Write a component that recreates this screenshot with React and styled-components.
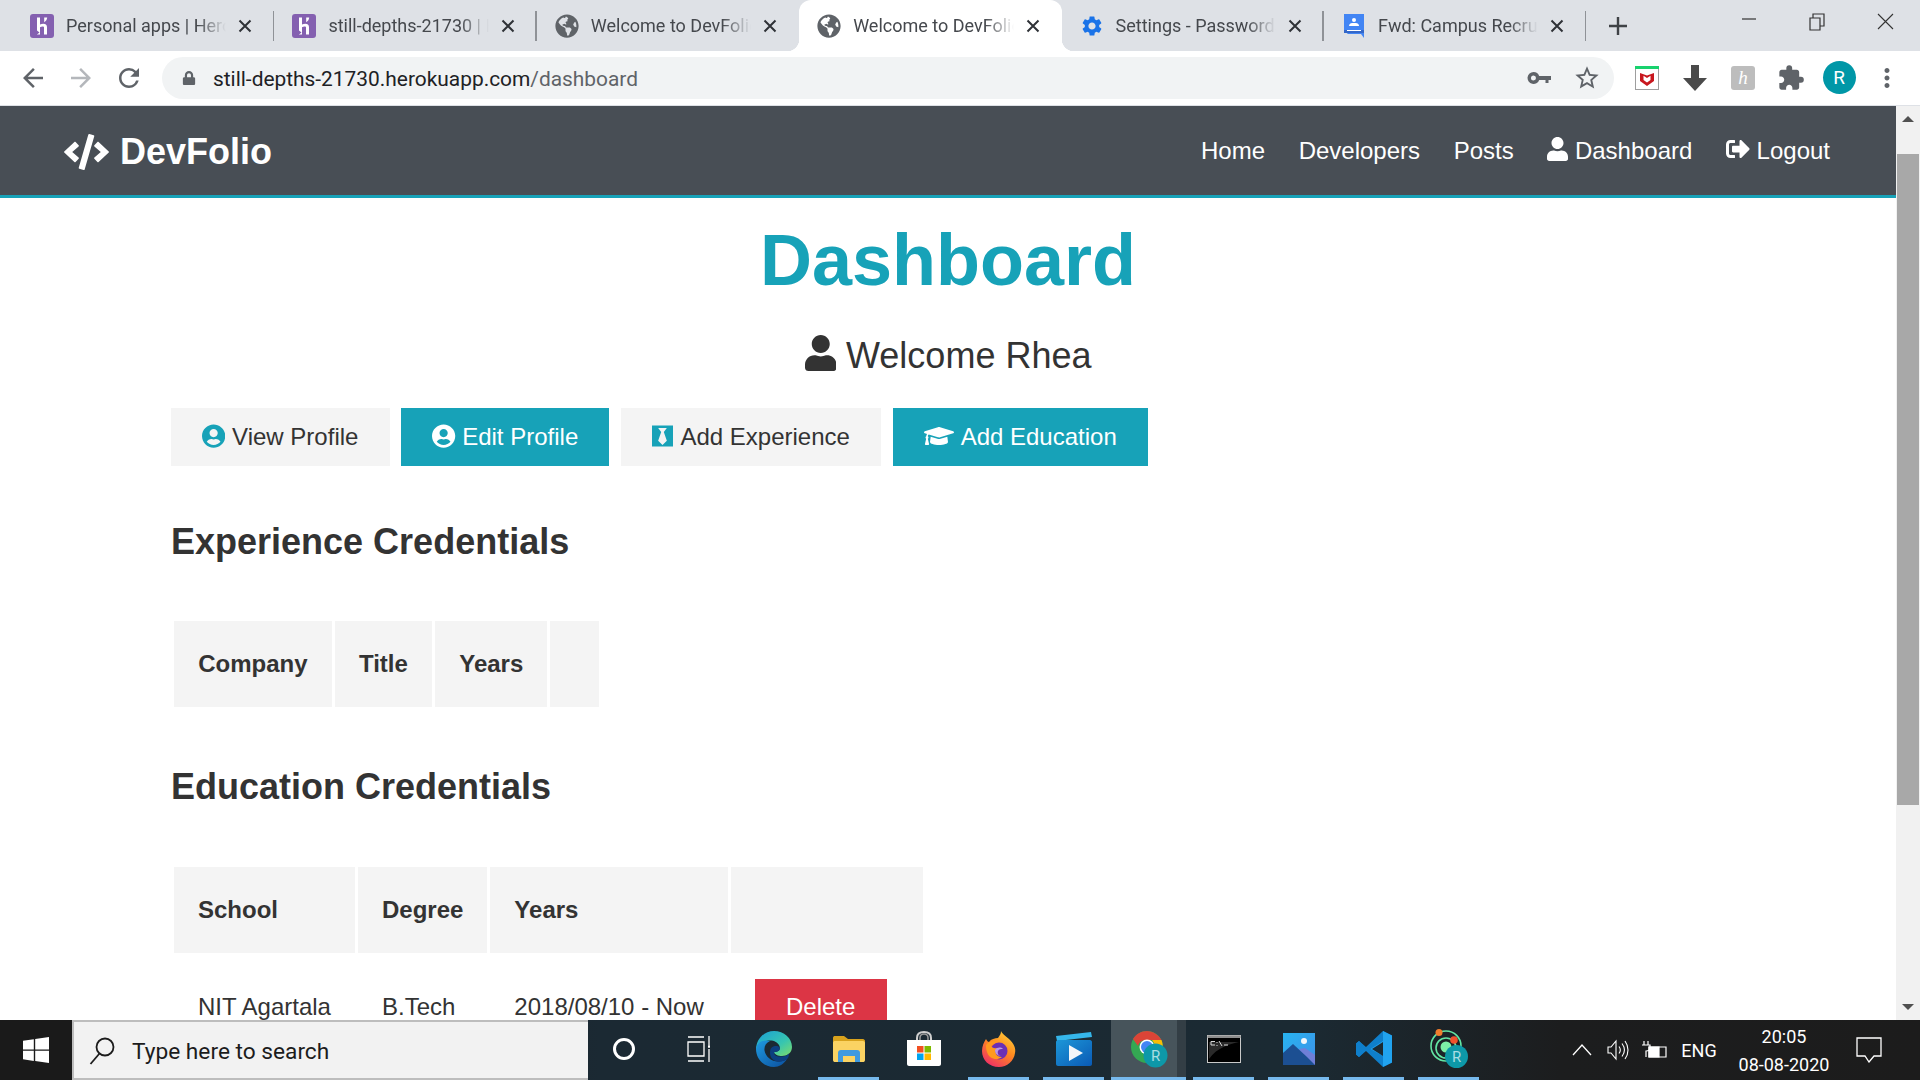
import React from "react";
import styled, { createGlobalStyle } from "styled-components";
import {
  FaCode,
  FaUser,
  FaSignOutAlt,
  FaUserCircle,
  FaBlackTie,
  FaGraduationCap,
  FaGlobeAmericas,
  FaLock,
} from "react-icons/fa";
import {
  MdSettings,
  MdArrowBack,
  MdArrowForward,
  MdRefresh,
  MdStarBorder,
  MdExtension,
  MdMoreVert,
} from "react-icons/md";

const GlobalStyle = createGlobalStyle`
  html, body {
    margin: 0;
    padding: 0;
    height: 100%;
    overflow: hidden;
    background: #fff;
  }
  * {
    box-sizing: border-box;
  }
`;

const uiFont = `Roboto, "Noto Sans", sans-serif`;
const pageFont = `"Liberation Sans", Arial, sans-serif`;

const Shell = styled.div`
  display: flex;
  flex-direction: column;
  width: 1920px;
  height: 1080px;
  overflow: hidden;
`;

/* browser tabs */
const TabStrip = styled.div`
  display: flex;
  align-items: stretch;
  flex: 0 0 51px;
  padding-left: 12px;
  background: #dee1e6;
  font-family: ${uiFont};
`;

const Tab = styled.div`
  position: relative;
  display: flex;
  align-items: center;
  flex: 0 0 262.4px;
  min-width: 0;
  padding: 0 22px 0 18px;
  gap: 12px;
  background: ${(props) => (props.$active ? "#fff" : "transparent")};
  border-radius: ${(props) => (props.$active ? "12px 12px 0 0" : "0")};

  &::after {
    content: "";
    display: ${(props) => (props.$sep ? "block" : "none")};
    position: absolute;
    right: 0;
    top: 11px;
    width: 1.5px;
    height: 30px;
    background: #8f9297;
  }
`;

const TabCurve = styled.span`
  position: absolute;
  bottom: 0;
  width: 12px;
  height: 12px;
  ${(props) =>
    props.$side === "left"
      ? "left: -12px; background: radial-gradient(circle at 0 0, transparent 12px, #fff 12.5px);"
      : "right: -12px; background: radial-gradient(circle at 100% 0, transparent 12px, #fff 12.5px);"}
`;

const Favicon = styled.span`
  display: flex;
  align-items: center;
  justify-content: center;
  flex: 0 0 24px;
  height: 24px;
  color: ${(props) => props.$color};
  font-size: 24px;
`;

const TabTitle = styled.span`
  flex: 1;
  min-width: 0;
  overflow: hidden;
  white-space: nowrap;
  font-size: 18px;
  color: #45484d;
  -webkit-mask-image: linear-gradient(90deg, #000 82%, transparent 100%);
  mask-image: linear-gradient(90deg, #000 82%, transparent 100%);
`;

const NewTabButton = styled.div`
  display: flex;
  align-items: center;
  justify-content: center;
  flex: 0 0 24px;
  margin-left: 19.6px;
`;

const WindowControls = styled.div`
  display: flex;
  margin-left: auto;
  padding-right: 1px;
`;

const WindowButton = styled.div`
  display: flex;
  justify-content: center;
  padding-top: 13px;
  width: 68px;
`;

/* address bar */
const Toolbar = styled.div`
  display: flex;
  align-items: center;
  flex: 0 0 55px;
  padding: 0 9px 1px;
  background: #fff;
  border-bottom: 1px solid #dee1e6;
  font-family: ${uiFont};
`;

const ToolButton = styled.div`
  display: flex;
  align-items: center;
  justify-content: center;
  flex: 0 0 48px;
  height: 42px;
  font-size: ${(props) => props.$size || 30}px;
  color: ${(props) => props.$color || "#5f6368"};
`;

const AddressBar = styled.div`
  display: flex;
  align-items: center;
  flex: 1;
  height: 42px;
  margin: 0 9px 0 9px;
  padding-left: 20px;
  padding-right: 3px;
  background: #f1f3f4;
  border-radius: 21px;
`;

const Url = styled.div`
  flex: 1;
  margin-left: 17px;
  padding-top: 2px;
  font-size: 20.9px;
  color: #202124;
`;

const UrlPath = styled.span`
  color: #5f6368;
`;

const HerokuExt = styled.span`
  display: flex;
  align-items: center;
  justify-content: center;
  width: 24px;
  height: 24px;
  background: #bdbdbd;
  border-radius: 3px;
  color: #fff;
  font-family: "Liberation Serif", serif;
  font-style: italic;
  font-size: 19px;
`;

const Avatar = styled.span`
  display: flex;
  align-items: center;
  justify-content: center;
  width: 33px;
  height: 33px;
  border-radius: 50%;
  background: #0097a7;
  color: #fff;
  font-size: 19px;
`;

/* web page */
const Viewport = styled.div`
  display: flex;
  flex: 1;
  min-height: 0;
`;

const Page = styled.div`
  flex: 1;
  min-width: 0;
  overflow: hidden;
  background: #fff;
  font-family: ${pageFont};
  font-size: 24px;
  line-height: 1.6;
  color: #333;
`;

const Navbar = styled.nav`
  display: flex;
  align-items: center;
  justify-content: space-between;
  height: 92px;
  padding: 2px 66px 0 64px;
  background: #484e55;
  border-bottom: 3px solid #17a2b8;
  color: #fff;
`;

const Logo = styled.div`
  display: flex;
  align-items: center;
  gap: 11px;
  font-size: 36px;
  font-weight: 700;
`;

const LogoIcon = styled(FaCode)`
  width: 45px;
  height: 36px;
`;

const NavLinks = styled.div`
  display: flex;
  gap: 33.6px;
`;

const NavLink = styled.a`
  color: #fff;
`;

const UserGlyph = styled(FaUser)`
  width: 21px;
  height: 24px;
  vertical-align: -2px;
`;

const LogoutGlyph = styled(FaSignOutAlt)`
  width: 24px;
  height: 24px;
  vertical-align: -2px;
`;

const Container = styled.div`
  width: 1650px;
  margin: 0 auto;
  padding: 19px 48px 0;
`;

const Title = styled.h1`
  margin: 0 0 24px;
  font-size: 72px;
  line-height: 1.2;
  font-weight: 700;
  text-align: center;
  color: #17a2b8;
`;

const Lead = styled.p`
  margin: 0 0 23px;
  font-size: 36px;
  text-align: center;
`;

const LeadIcon = styled(FaUser)`
  width: 31.5px;
  height: 36px;
  vertical-align: -3px;
`;

const ButtonRow = styled.div`
  display: flex;
  gap: 11.5px;
`;

const ActionButton = styled.a`
  display: block;
  padding: 9.6px 31.2px;
  white-space: pre;
  background: ${(props) => (props.$primary ? "#17a2b8" : "#f4f4f4")};
  color: ${(props) => (props.$primary ? "#fff" : "#333")};
`;

const CircleGlyph = styled(FaUserCircle)`
  width: 23.25px;
  height: 24px;
  vertical-align: -3px;
  color: ${(props) => (props.$primary ? "#fff" : "#17a2b8")};
`;

const TieGlyph = styled(FaBlackTie)`
  width: 21px;
  height: 24px;
  margin-right: 2px;
  vertical-align: -3px;
  color: #17a2b8;
`;

const CapGlyph = styled(FaGraduationCap)`
  width: 30px;
  height: 24px;
  margin-right: 1.5px;
  vertical-align: -3px;
`;

const SectionTitle = styled.h2`
  margin: ${(props) => props.$top}px 0 48px;
  font-size: 36px;
  line-height: 1.6;
  font-weight: 700;
`;

const Table = styled.table`
  border-collapse: separate;
  border-spacing: 3px;
`;

const Th = styled.th`
  padding: 24px ${(props) => props.$pad || 24}px;
  line-height: 38px;
  text-align: left;
  background: #f4f4f4;
  font-weight: 700;
`;

const Td = styled.td`
  padding: 23px 24px 24px;
  text-align: left;
`;

const DeleteButton = styled.button`
  display: inline-block;
  margin-right: 12px;
  padding: 9.6px 31.2px;
  border: none;
  background: #dc3545;
  color: #fff;
  font: inherit;
`;

/* scrollbar */
const Scrollbar = styled.div`
  display: flex;
  flex-direction: column;
  align-items: center;
  flex: 0 0 24px;
  background: #f1f1f1;
`;

const ScrollArrow = styled.div`
  flex: 0 0 26px;
  display: flex;
  align-items: center;
  justify-content: center;
  margin-top: ${(props) => (props.$down ? "auto" : "0")};

  &::before {
    content: "";
    border-left: 6px solid transparent;
    border-right: 6px solid transparent;
    ${(props) =>
      props.$down
        ? "border-top: 6px solid #505050;"
        : "border-bottom: 6px solid #505050;"}
  }
`;

const ScrollThumb = styled.div`
  width: 22px;
  height: 651px;
  margin-top: 22px;
  background: #a8a8a8;
`;

/* windows taskbar */
const Taskbar = styled.div`
  display: flex;
  flex: 0 0 60px;
  background: linear-gradient(
    90deg,
    #1a1a1a 0,
    #1a1a1a 72px,
    #1b2933 600px,
    #1b2a33 1300px,
    #1c1d1e 1560px,
    #1c1c1c 100%
  );
  font-family: ${uiFont};
  color: #fff;
`;

const StartButton = styled.div`
  display: flex;
  align-items: center;
  justify-content: center;
  flex: 0 0 72px;
`;

const SearchBox = styled.div`
  display: flex;
  align-items: center;
  flex: 0 0 516px;
  padding: 2px 0 0 15px;
  gap: 17px;
  background: #f2f2f2;
  border: 2px solid #bdbdbd;
  border-right: none;
  color: #1c1c1c;
  font-size: 22.7px;
`;

const AppRow = styled.div`
  display: flex;
  margin-left: -2px;
`;

const AppSlot = styled.div`
  position: relative;
  display: flex;
  align-items: center;
  justify-content: center;
  flex: 0 0 75px;
  padding-bottom: 2px;
  background: ${(props) =>
    props.$active
      ? "linear-gradient(90deg, #47545b 0, #47545b 88%, #333e45 88%)"
      : "transparent"};

  &::after {
    content: "";
    display: ${(props) => (props.$open ? "block" : "none")};
    position: absolute;
    left: ${(props) => (props.$active ? "0" : "7px")};
    right: ${(props) => (props.$active ? "0" : "7px")};
    bottom: 0;
    height: 3px;
    background: #76b9ed;
  }
`;

const Tray = styled.div`
  display: flex;
  align-items: stretch;
  margin-left: auto;
  padding-right: 23px;
`;

const TrayItem = styled.div`
  display: flex;
  align-items: center;
  justify-content: center;
  flex: 0 0 ${(props) => props.$width}px;
  font-size: 18px;
`;

const Clock = styled.div`
  display: flex;
  flex-direction: column;
  align-items: center;
  justify-content: center;
  flex: 0 0 114px;
  padding-top: 2px;
  font-size: 18px;
  line-height: 28px;
`;

const HerokuIcon = () => (
  <svg width="24" height="24" viewBox="0 0 24 24">
    <rect width="24" height="24" rx="3" fill="#8460b0" />
    <path d="M7 3.5H10V10.5C12.5 9.5 17 9 17 13V20.5H14V13.5C14 12 11.5 12.5 10 13.2V20.5H7Z" fill="#fff" />
    <path d="M14.2 3.5H17.2C17 5.5 16 7 14.2 8.3Z" fill="#fff" />
    <path d="M7 16.5 9.5 18.5 7 20.5Z" fill="#8460b0" />
  </svg>
);

const TabCloseSvg = styled.svg`
  flex: 0 0 14px;
`;

const TabCloseIcon = () => (
  <TabCloseSvg width="14" height="14" viewBox="0 0 14 14" stroke="#2f3237" strokeWidth="2">
    <path d="M1.5 1.5 12.5 12.5M12.5 1.5 1.5 12.5" />
  </TabCloseSvg>
);

const PlusIcon = () => (
  <svg width="20" height="20" viewBox="0 0 20 20" stroke="#3f4246" strokeWidth="2.4">
    <path d="M10 1V19M1 10H19" />
  </svg>
);

const KeyIcon = () => (
  <svg width="24" height="14" viewBox="0 0 24 14" fill="#5f6368">
    <path d="M6.5 1A6 6 0 0 1 12.2 5H24V9H21.5V12H18.5V9H12.2A6 6 0 1 1 6.5 1ZM6.5 4.5A2.5 2.5 0 1 0 6.5 9.5 2.5 2.5 0 0 0 6.5 4.5Z" fillRule="evenodd" />
  </svg>
);

const DownloadArrowIcon = () => (
  <svg width="24" height="26" viewBox="0 0 24 26" fill="#4a4a4a">
    <path d="M8 0H16V13H24L12 26 0 13H8Z" />
  </svg>
);

const WindowsLogo = () => (
  <svg width="26" height="26" viewBox="0 0 26 26" fill="#fff">
    <path d="M0 3.8 10.8 2.3V12.4H0ZM12.2 2.1 26 0V12.4H12.2ZM0 13.8H10.8V23.9L0 22.3ZM12.2 13.8H26V26L12.2 24.1Z" />
  </svg>
);

const SearchIcon = () => (
  <svg width="26" height="28" viewBox="0 0 26 28" fill="none" stroke="#1c1c1c" strokeWidth="1.8">
    <circle cx="16" cy="10" r="8.5" />
    <path d="M10.5 16.5 1.5 27" />
  </svg>
);

const Cortana = () => (
  <svg width="24" height="24" viewBox="0 0 24 24">
    <circle cx="12" cy="12" r="9.5" fill="none" stroke="#fff" strokeWidth="3" />
  </svg>
);

const TaskView = () => (
  <svg width="24" height="26" viewBox="0 0 24 26" fill="none" stroke="#fff" strokeWidth="1.3">
    <path d="M1 1H17M1 25H17M1 6H17V20H1ZM22 0V9M22 13V26" />
    <path d="M21 10.5H23" strokeWidth="2.5" />
  </svg>
);

const EdgeIcon = () => (
  <svg width="36" height="36" viewBox="0 0 36 36">
    <defs>
      <linearGradient id="edgeTop" x1="0" y1="0" x2="1" y2="1">
        <stop offset="0" stopColor="#1a9fd8" />
        <stop offset="0.6" stopColor="#37c5b0" />
        <stop offset="1" stopColor="#7fdc6a" />
      </linearGradient>
      <linearGradient id="edgeLow" x1="0" y1="0" x2="1" y2="1">
        <stop offset="0" stopColor="#1f9be0" />
        <stop offset="1" stopColor="#0b4f9e" />
      </linearGradient>
    </defs>
    <path d="M18 0C28 0 36 7 36 16C36 22 31 25 26 25C22 25 18.5 23.5 18 21C22 21 25 19 23.5 15C21.5 10 14 8 8 11C4.5 13 2 15 0 19C0 8 8 0 18 0Z" fill="url(#edgeTop)" />
    <path d="M0 18C1 11 8 8 14 10C10 12 8 15 8.5 19.5C9.5 26 16 31 23 30.5C26 30.5 29 29.5 31 28C28 33 23 36 18 36C8 36 0 28 0 18Z" fill="url(#edgeLow)" />
    <path d="M14 22C14 17 16 15 20 15C23 15 24.5 17 23.5 19C22 21 19 20.5 18 21.5C18 25 22 26 26 25.5C29 25.3 31 24.5 33 22.5C33 26 32 27 31 28C28 30.5 24 31 21 30.5C17 29.5 14 26.5 14 22Z" fill="#0c3f80" />
  </svg>
);

const FolderIcon = () => (
  <svg width="32" height="28" viewBox="0 0 32 28">
    <path d="M0 3C0 1.5 1 1 2 1H11L15 4H30C31 4 32 5 32 6V9H0Z" fill="#d9a31d" />
    <path d="M0 8C0 6.5 1 6 2 6H30C31 6 32 7 32 8V25C32 26.5 31 27 30 27H2C1 27 0 26.5 0 25Z" fill="#fbd363" />
    <path d="M5 27V18C5 16 6 15 8 15H24C26 15 27 16 27 18V27H22V21H10V27Z" fill="#3f9ae0" />
  </svg>
);

const StoreIcon = () => (
  <svg width="36" height="36" viewBox="0 0 36 36">
    <path d="M11 11V7C11 2 14 1 18 1C22 1 25 2 25 7V11" fill="none" stroke="#cfcfcf" strokeWidth="2" />
    <path d="M14 11V7C14 4 16 3 18 3C20 3 22 4 22 7V11" fill="none" stroke="#9a9a9a" strokeWidth="1.5" />
    <path d="M1 9H35V33C35 34 34 35 33 35H3C2 35 1 34 1 33Z" fill="#fff" />
    <rect x="11" y="15" width="6.5" height="6.5" fill="#f25022" />
    <rect x="18.5" y="15" width="6.5" height="6.5" fill="#7fba00" />
    <rect x="11" y="22.5" width="6.5" height="6.5" fill="#00a4ef" />
    <rect x="18.5" y="22.5" width="6.5" height="6.5" fill="#ffb900" />
  </svg>
);

const FirefoxIcon = () => (
  <svg width="36" height="36" viewBox="0 0 36 36">
    <defs>
      <linearGradient id="foxBody" x1="0.8" y1="0" x2="0.2" y2="1">
        <stop offset="0" stopColor="#ffd03a" />
        <stop offset="0.45" stopColor="#ff8a1f" />
        <stop offset="1" stopColor="#ee2a6a" />
      </linearGradient>
    </defs>
    <path d="M20 0C21 3 25 5 28 8C33 13 35 17 34 22C33 30 26 36 18 36C8 36 1 29 1 20C1 15 3 11 5 8C6 10 7 11 8 11C10 8 14 7 17 7C19 4 20 3 20 0Z" fill="url(#foxBody)" />
    <circle cx="18" cy="20" r="8.5" fill="#6b2fb5" />
    <path d="M5 14C8 10 13 9 17 11C14 12 11 14 10 15C12 18 15 17 16 17C13 21 15 26 21 26C16 30 8 28 6 21C5 18 5 16 5 14Z" fill="#ff9a1f" />
    <path d="M14 19C16 16 20 16 22 18C20 18 18 18 17 20C16 23 18 25 21 25C17 25 14 23 14 19Z" fill="#b998e8" />
  </svg>
);

const ClapperIcon = () => (
  <svg width="36" height="34" viewBox="0 0 36 34">
    <defs>
      <linearGradient id="clapBody" x1="0" y1="0" x2="1" y2="1">
        <stop offset="0" stopColor="#1d97d8" />
        <stop offset="1" stopColor="#0a5ab5" />
      </linearGradient>
    </defs>
    <path d="M0 4 35 0 36 5 1 9Z" fill="#35b6ea" />
    <path d="M0 10C0 9 1 8 2 8H34C35 8 36 9 36 10V32C36 33 35 34 34 34H2C1 34 0 33 0 32Z" fill="url(#clapBody)" />
    <path d="M13 13 27 21 13 29Z" fill="#f3f6f9" />
  </svg>
);

const ChromeIcon = () => (
  <svg width="38" height="38" viewBox="0 0 38 38">
    <circle cx="17" cy="17" r="16" fill="#34a853" />
    <path d="M3 9C6 4 11 1 17 1C23 1 29 5 31.5 10H17C12 10 9 12 8 16Z" fill="#db4437" />
    <path d="M31.5 10C33 14 33.5 20 31 24L23 20C25 17 25 13 22 10Z" fill="#fbbc05" />
    <circle cx="17" cy="17" r="7.5" fill="#fff" />
    <circle cx="17" cy="17" r="6" fill="#4285f4" />
    <circle cx="25.5" cy="25.5" r="12" fill="#0d98a8" />
    <text x="25.5" y="31" textAnchor="middle" fontFamily="Roboto, sans-serif" fontSize="15" fill="#a9dde3">R</text>
  </svg>
);

const CmdIcon = () => (
  <svg width="34" height="28" viewBox="0 0 34 28">
    <rect x="0.5" y="0.5" width="33" height="27" fill="#000" stroke="#c9c9c9" />
    <rect x="0.5" y="0.5" width="33" height="2.5" fill="#8d8d8d" />
    <path d="M2 24V7C10 7 20 7 32 7C24 9 10 12 2 24Z" fill="#2a2a2a" />
    <path d="M4 6.5H8M4 6.5V10H8M10 7V8M10 10V11M12 6 15 11M17 10 21 10" stroke="#d8d8d8" strokeWidth="1" fill="none" />
  </svg>
);

const PhotosIcon = () => (
  <svg width="32" height="32" viewBox="0 0 32 32">
    <defs>
      <linearGradient id="photoSky" x1="0" y1="0" x2="1" y2="1">
        <stop offset="0" stopColor="#27b4f0" />
        <stop offset="1" stopColor="#3f8fe8" />
      </linearGradient>
    </defs>
    <rect width="32" height="32" fill="url(#photoSky)" />
    <circle cx="21" cy="8" r="3" fill="#f3f6fa" />
    <path d="M16 16 22 15 32 22V32H20Z" fill="#6f7fd8" />
    <path d="M0 20 10 11 24 24 32 32H0Z" fill="#1c4f92" />
  </svg>
);

const VsCodeIcon = () => (
  <svg width="36" height="36" viewBox="0 0 36 36">
    <path d="M27 0 36 4.5V31.5L27 36 10 20 3 26 0 23.5V12.5L3 10 10 16Z" fill="#0f7fcb" />
    <path d="M27 0 36 4.5V31.5L27 36V25L14.5 18 27 10Z" fill="#21a3ef" />
    <path d="M3 10 0 12.5V23.5L3 26 7 22 3 18 7 14Z" fill="#0f7fcb" />
    <path d="M27 11 16 18 27 25Z" fill="#1b2a33" />
  </svg>
);

const GitKrakenIcon = () => (
  <svg width="40" height="40" viewBox="0 0 40 40">
    <circle cx="17" cy="17" r="15" fill="none" stroke="#63e6a4" strokeWidth="1.6" />
    <circle cx="17" cy="19" r="10" fill="none" stroke="#63e6a4" strokeWidth="1.6" />
    <circle cx="17" cy="18" r="5.5" fill="#7df0a8" />
    <circle cx="10" cy="3.5" r="3.5" fill="#f07d2c" />
    <circle cx="25" cy="11" r="3.8" fill="#f0512c" />
    <circle cx="27.5" cy="27.5" r="11.5" fill="#0d98a8" />
    <text x="27.5" y="33" textAnchor="middle" fontFamily="Roboto, sans-serif" fontSize="15" fill="#a9dde3">R</text>
  </svg>
);

const ClassroomIcon = () => (
  <svg width="20" height="24" viewBox="0 0 20 24">
    <path d="M0 0H20V24L17 20H4L0 17Z" fill="#4285f4" />
    <path d="M0 16H20V19H0Z" fill="#3367c9" />
    <circle cx="10" cy="6" r="2" fill="#fff" />
    <path d="M5 12C5 9.5 7 9 10 9C13 9 15 9.5 15 12Z" fill="#fff" />
    <path d="M3 16H17V17H3Z" fill="#fff" />
  </svg>
);

const McAfeeIcon = () => (
  <svg width="24" height="24" viewBox="0 0 24 24">
    <rect x="0.5" y="0.5" width="23" height="23" fill="#fff" stroke="#9e9e9e" />
    <rect width="24" height="3" fill="#18d26e" />
    <path d="M5 7 12 9.5 19 7V15L12 20 5 15ZM8.5 9.8V14L12 16.5 15.5 14V9.8L12 12Z" fill="#c8171e" />
  </svg>
);

const SpeakerIcon = () => (
  <svg width="24" height="24" viewBox="0 0 24 24" fill="none" stroke="#fff" strokeWidth="1.1">
    <path d="M2 9H5L10 3V21L5 15H2Z" />
    <path d="M13 8.5C14.5 10.5 14.5 13.5 13 15.5M16 5.5C19 9.5 19 14.5 16 18.5M19 3C23 8.5 23 15.5 19 21" />
  </svg>
);

const BatteryIcon = () => (
  <svg width="26" height="24" viewBox="0 0 26 24" fill="none" stroke="#fff" strokeWidth="1.2">
    <path d="M8 9H25V19H8Z" />
    <path d="M8 9H18V19H8Z" fill="#fff" />
    <path d="M3 3V7M7 3V7M1 7H9V10C9 12 7 13 5 13V19" />
  </svg>
);

const ChevronIcon = () => (
  <svg width="20" height="12" viewBox="0 0 20 12" fill="none" stroke="#fff" strokeWidth="1.3">
    <path d="M1 11 10 1 19 11" />
  </svg>
);

const NotificationIcon = () => (
  <svg width="26" height="26" viewBox="0 0 26 26" fill="none" stroke="#fff" strokeWidth="1.3">
    <path d="M1 1H25V19H18L13 25 9 19H1Z" />
  </svg>
);

const MinimizeIcon = () => (
  <svg width="14" height="14" viewBox="0 0 14 14" stroke="#333" strokeWidth="1.2">
    <path d="M0 6H14" />
  </svg>
);

const RestoreIcon = () => (
  <svg width="16" height="18" viewBox="0 0 16 18" fill="none" stroke="#333" strokeWidth="1.2">
    <path d="M1 5H11V17H1ZM4 5V1H15V13H11" />
  </svg>
);

const CloseIcon = () => (
  <svg width="17" height="17" viewBox="0 0 17 17" stroke="#333" strokeWidth="1.1">
    <path d="M1 1 16 16M16 1 1 16" />
  </svg>
);

const tabs = [
  { title: "Personal apps | Heroku", icon: <HerokuIcon />, color: "#7f5bac", sep: true },
  { title: "still-depths-21730 | Heroku", icon: <HerokuIcon />, color: "#7f5bac", sep: true },
  { title: "Welcome to DevFolio", icon: <FaGlobeAmericas />, color: "#5f6368" },
  { title: "Welcome to DevFolio", icon: <FaGlobeAmericas />, color: "#5f6368", active: true },
  { title: "Settings - Passwords", icon: <MdSettings />, color: "#1a73e8", sep: true },
  { title: "Fwd: Campus Recruitment", icon: <ClassroomIcon />, color: "#4285f4", sep: true },
];

const apps = [
  { icon: <EdgeIcon /> },
  { icon: <FolderIcon />, open: true },
  { icon: <StoreIcon /> },
  { icon: <FirefoxIcon />, open: true },
  { icon: <ClapperIcon />, open: true },
  { icon: <ChromeIcon />, open: true, active: true },
  { icon: <CmdIcon />, open: true },
  { icon: <PhotosIcon />, open: true },
  { icon: <VsCodeIcon />, open: true },
  { icon: <GitKrakenIcon />, open: true },
];

const App = () => (
  <Shell>
    <GlobalStyle />

    <TabStrip>
      {tabs.map((tab, i) => (
        <Tab key={i} $active={tab.active} $sep={tab.sep}>
          {tab.active && <TabCurve $side="left" />}
          <Favicon $color={tab.color}>{tab.icon}</Favicon>
          <TabTitle>{tab.title}</TabTitle>
          <TabCloseIcon />
          {tab.active && <TabCurve $side="right" />}
        </Tab>
      ))}
      <NewTabButton><PlusIcon /></NewTabButton>
      <WindowControls>
        <WindowButton><MinimizeIcon /></WindowButton>
        <WindowButton><RestoreIcon /></WindowButton>
        <WindowButton><CloseIcon /></WindowButton>
      </WindowControls>
    </TabStrip>

    <Toolbar>
      <ToolButton><MdArrowBack /></ToolButton>
      <ToolButton $color="#b4b7bb"><MdArrowForward /></ToolButton>
      <ToolButton><MdRefresh /></ToolButton>
      <AddressBar>
        <FaLock size={14} color="#5f6368" />
        <Url>
          still-depths-21730.herokuapp.com<UrlPath>/dashboard</UrlPath>
        </Url>
        <ToolButton><KeyIcon /></ToolButton>
        <ToolButton $size={28}><MdStarBorder /></ToolButton>
      </AddressBar>
      <ToolButton><McAfeeIcon /></ToolButton>
      <ToolButton><DownloadArrowIcon /></ToolButton>
      <ToolButton><HerokuExt>h</HerokuExt></ToolButton>
      <ToolButton $size={28}><MdExtension /></ToolButton>
      <ToolButton><Avatar>R</Avatar></ToolButton>
      <ToolButton $size={30}><MdMoreVert /></ToolButton>
    </Toolbar>

    <Viewport>
      <Page>
        <Navbar>
          <Logo><LogoIcon />DevFolio</Logo>
          <NavLinks>
            <NavLink>Home</NavLink>
            <NavLink>Developers</NavLink>
            <NavLink>Posts</NavLink>
            <NavLink><UserGlyph /> Dashboard</NavLink>
            <NavLink><LogoutGlyph /> Logout</NavLink>
          </NavLinks>
        </Navbar>

        <Container>
          <Title>Dashboard</Title>
          <Lead><LeadIcon /> Welcome Rhea</Lead>

          <ButtonRow>
            <ActionButton><CircleGlyph /> View Profile</ActionButton>
            <ActionButton $primary><CircleGlyph $primary /> Edit Profile</ActionButton>
            <ActionButton><TieGlyph /> Add Experience</ActionButton>
            <ActionButton $primary><CapGlyph /> Add Education</ActionButton>
          </ButtonRow>

          <SectionTitle $top={47}>Experience Credentials</SectionTitle>
          <Table>
            <thead>
              <tr>
                <Th $pad={24.2}>Company</Th>
                <Th $pad={24.2}>Title</Th>
                <Th $pad={24.2}>Years</Th>
                <Th $pad={24.2} />
              </tr>
            </thead>
          </Table>

          <SectionTitle $top={48}>Education Credentials</SectionTitle>
          <Table>
            <thead>
              <tr>
                <Th>School</Th>
                <Th>Degree</Th>
                <Th>Years</Th>
                <Th />
              </tr>
            </thead>
            <tbody>
              <tr>
                <Td>NIT Agartala</Td>
                <Td>B.Tech</Td>
                <Td>2018/08/10 - Now</Td>
                <Td><DeleteButton>Delete</DeleteButton></Td>
              </tr>
            </tbody>
          </Table>
        </Container>
      </Page>

      <Scrollbar>
        <ScrollArrow />
        <ScrollThumb />
        <ScrollArrow $down />
      </Scrollbar>
    </Viewport>

    <Taskbar>
      <StartButton><WindowsLogo /></StartButton>
      <SearchBox>
        <SearchIcon />
        Type here to search
      </SearchBox>
      <AppRow>
        <AppSlot><Cortana /></AppSlot>
        <AppSlot><TaskView /></AppSlot>
        {apps.map((app, i) => (
          <AppSlot key={i} $open={app.open} $active={app.active}>{app.icon}</AppSlot>
        ))}
      </AppRow>
      <Tray>
        <TrayItem $width={36}><ChevronIcon /></TrayItem>
        <TrayItem $width={36}><SpeakerIcon /></TrayItem>
        <TrayItem $width={35}><BatteryIcon /></TrayItem>
        <TrayItem $width={56}>ENG</TrayItem>
        <Clock>
          <span>20:05</span>
          <span>08-08-2020</span>
        </Clock>
        <TrayItem $width={56}><NotificationIcon /></TrayItem>
      </Tray>
    </Taskbar>
  </Shell>
);

export default App;
